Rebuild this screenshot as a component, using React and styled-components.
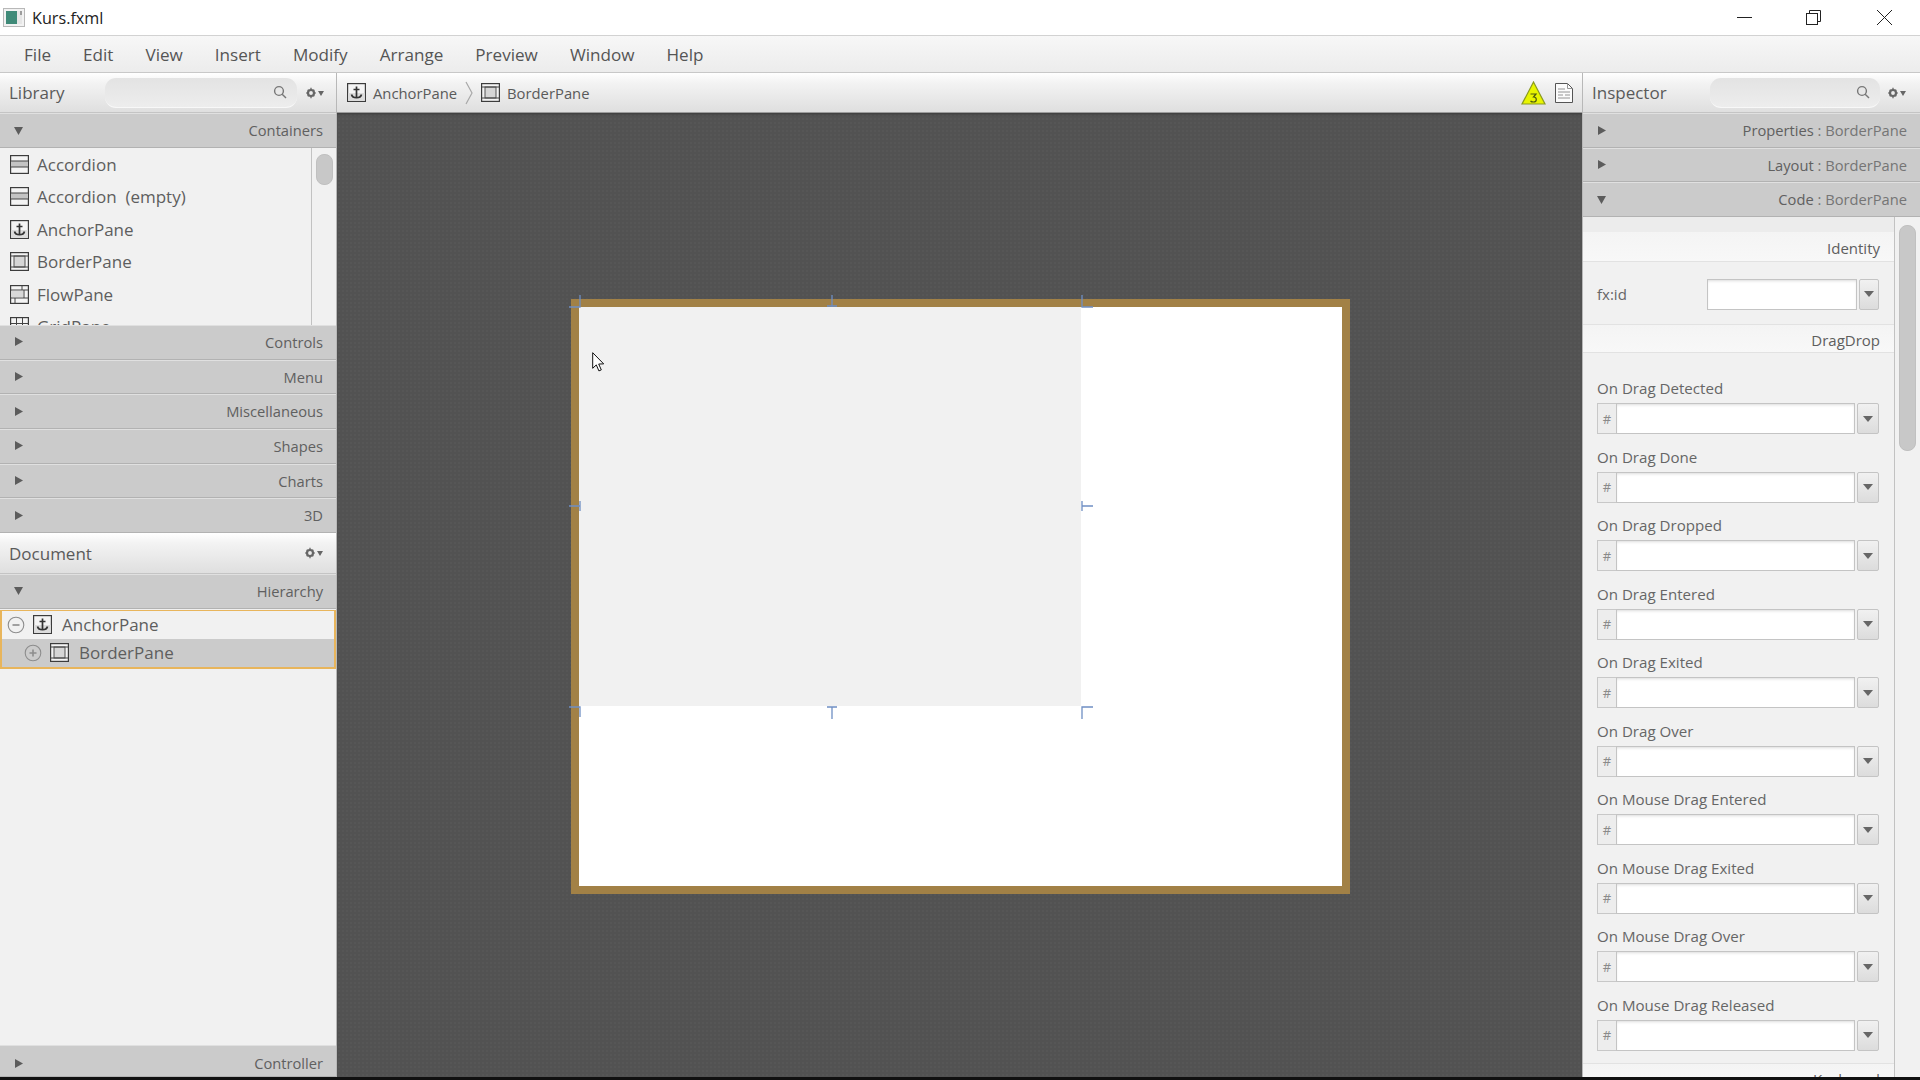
import React from 'react';
import styled, { createGlobalStyle } from 'styled-components';

const GlobalStyle = createGlobalStyle`
    html, body {
        margin: 0;
        padding: 0;
        background: #000;
    }
    body {
        font-family: "Open Sans", "Noto Sans", sans-serif;
        color: #5c5c5c;
    }
`;

const Page = styled('div')`
    width: 1920px;
    height: 1080px;
    box-sizing: border-box;
    padding-bottom: 3px;
    display: flex;
    flex-direction: column;
    overflow: hidden;
    background: #111;
`;

const TitleBar = styled('div')`
    height: 35px;
    flex: none;
    display: flex;
    align-items: center;
    background: #fff;
    padding-left: 3px;
`;

const TitleText = styled('span')`
    margin-left: 7px;
    font-size: 16.2px;
    color: #222;
    flex: 1;
`;

const WindowButton = styled('div')`
    width: 15px;
    height: 15px;
    margin-right: ${props => props.$gap}px;
    color: #222;
    display: flex;
`;

const MenuBar = styled('div')`
    height: 38px;
    flex: none;
    display: flex;
    align-items: center;
    padding-left: 8px;
    box-sizing: border-box;
    background: linear-gradient(#f7f7f7, #ececec);
    border-top: 1px solid #d2d2d2;
    border-bottom: 1px solid #c8c8c8;
`;

const MenuItem = styled('span')`
    padding: 0 16px;
    font-size: 17.1px;
    color: #555;
`;

const Main = styled('div')`
    flex: 1;
    min-height: 0;
    display: flex;
`;

const SidePanel = styled('div')`
    width: ${props => props.$width}px;
    flex: none;
    display: flex;
    flex-direction: column;
    min-height: 0;
    background: #f1f1f1;
    box-sizing: border-box;
`;

const PanelBar = styled('div')`
    height: ${props => props.$height || 40}px;
    flex: none;
    display: flex;
    align-items: center;
    box-sizing: border-box;
    padding: 0 8px 0 9px;
    background: linear-gradient(#fff 0%, #f3f3f3 25%, #dfdfdf 100%);
    border-bottom: 1px solid #c4c4c4;
`;

const PanelTitle = styled('span')`
    font-size: ${props => props.$size || 17}px;
    color: #5a5a5a;
    flex: ${props => props.$grow ? 1 : 'none'};
`;

const SearchField = styled('div')`
    width: ${props => props.$width}px;
    height: 30px;
    margin-left: ${props => props.$left}px;
    box-sizing: border-box;
    display: flex;
    align-items: center;
    justify-content: flex-end;
    padding-right: 10px;
    border-radius: 11px;
    background: linear-gradient(#e3e3e3, #ededed);
    border-bottom: 1px solid #f8f8f8;
    color: #777;
`;

const MenuGear = styled('span')`
    display: flex;
    margin-left: ${props => props.$left || 0}px;
    margin-right: ${props => props.$right || 0}px;
    color: #666;
`;

const SectionHeader = styled('div')`
    height: ${props => props.$height}px;
    flex: none;
    box-sizing: border-box;
    display: flex;
    align-items: center;
    justify-content: space-between;
    padding: ${props => props.$shift || 0}px 13px 1px 13px;
    background: #cbcbcb;
    border-top: 1px solid #e0e0e0;
    border-bottom: 1px solid #b2b2b2;
    font-size: 14.7px;
    color: #606060;
`;

const HeaderText = styled('span')`
    b {
        font-weight: 400;
        color: #757575;
    }
`;

const ListArea = styled('div')`
    height: 177px;
    flex: none;
    display: flex;
    overflow: hidden;
    background: #f1f1f1;
`;

const ListColumn = styled('div')`
    flex: 1;
    min-width: 0;
    overflow: hidden;
`;

const ListRow = styled('div')`
    height: 32.5px;
    display: flex;
    align-items: center;
    padding-left: 10px;
    font-size: 17px;
    color: #5e5e5e;
    white-space: pre;
    svg {
        margin-right: 8px;
    }
`;

const ScrollTrack = styled('div')`
    width: ${props => props.$width}px;
    flex: none;
    box-sizing: border-box;
    border-left: 1px solid #c2c2c2;
    padding-top: ${props => props.$top}px;
    display: flex;
    justify-content: center;
    background: #f1f1f1;
`;

const ScrollThumb = styled('div')`
    width: ${props => props.$width}px;
    height: ${props => props.$height}px;
    border-radius: 8px;
    background: #c8c8c8;
    border: 1px solid #c0c0c0;
    box-sizing: border-box;
`;

const Spacer = styled('div')`
    flex: 1;
    min-height: 0;
    background: ${props => props.$bg || '#f1f1f1'};
`;

const TreeBox = styled('div')`
    flex: none;
    border: 2px solid #e8b55c;
    border-top-width: 1px;
    margin-top: 1px;
`;

const TreeRow = styled('div')`
    height: 28px;
    display: flex;
    align-items: center;
    padding-left: ${props => props.$indent}px;
    font-size: 17px;
    color: #5e5e5e;
    background: ${props => props.$selected ? '#cbcbcb' : '#f1f1f1'};
`;

const TreeToggle = styled('span')`
    display: flex;
    margin-right: 8px;
    color: #8d8d8d;
`;

const TreeLabel = styled('span')`
    margin-left: 10px;
`;

const Center = styled('div')`
    flex: 1;
    min-width: 0;
    display: flex;
    flex-direction: column;
    border-left: 1px solid #b8b8b8;
    border-right: 1px solid #b8b8b8;
`;

const BreadBar = styled('div')`
    height: 40px;
    flex: none;
    box-sizing: border-box;
    display: flex;
    align-items: center;
    padding: 0 9px 0 10px;
    background: linear-gradient(#fff 0%, #f3f3f3 25%, #dfdfdf 100%);
    border-bottom: 1px solid #9c9c9c;
    font-size: 14.8px;
    color: #5a5a5a;
`;

const Crumb = styled('span')`
    display: flex;
    align-items: center;
    gap: 7px;
`;

const CrumbArrow = styled('span')`
    display: flex;
    margin: 0 8px;
    color: #a8a8a8;
`;

const BarFill = styled('span')`
    flex: 1;
`;

const BarIcon = styled('span')`
    display: flex;
    margin-left: ${props => props.$left || 0}px;
`;

const Canvas = styled('div')`
    flex: 1;
    min-height: 0;
    display: flex;
    align-items: center;
    justify-content: center;
    padding: 3px 0 0 2px;
    background-color: #525252;
    background-image: radial-gradient(#565656 25%, transparent 30%);
    background-size: 4px 4px;
    box-shadow: inset 0 3px 3px -2px #3a3a3a;
`;

const Frame = styled('div')`
    position: relative;
    width: 763px;
    height: 579px;
    flex: none;
    background: #fff;
    border: 8px solid #a28146;
`;

const ContentPane = styled('div')`
    position: relative;
    width: 502px;
    height: 399px;
    background: #f1f1f1;
`;

const HandleLayer = styled('svg')`
    position: absolute;
    left: -12px;
    top: -14px;
    overflow: visible;
`;

const Cursor = styled('svg')`
    position: absolute;
    left: 13px;
    top: 45px;
`;

const InspectorBody = styled('div')`
    flex: 1;
    min-height: 0;
    display: flex;
    overflow: hidden;
`;

const InspectorColumn = styled('div')`
    flex: 1;
    min-width: 0;
    overflow: hidden;
`;

const TopStrip = styled('div')`
    height: 15px;
    background: #ececec;
`;

const GroupHeading = styled('div')`
    height: ${props => props.$height}px;
    box-sizing: border-box;
    display: flex;
    align-items: center;
    justify-content: flex-end;
    padding: 3px 14px 0 0;
    font-size: 15px;
    color: #5e5e5e;
    background: linear-gradient(#f4f4f4, #f8f8f8);
    border-bottom: 1px solid #e2e2e2;
`;

const IdRow = styled('div')`
    height: 63px;
    box-sizing: border-box;
    display: flex;
    align-items: center;
    padding: 2px 15px 0 14px;
    font-size: 15px;
    color: #666;
    border-bottom: 1px solid #e2e2e2;
`;

const IdLabel = styled('span')`
    flex: 1;
`;

const FieldInput = styled('div')`
    width: ${props => props.$width}px;
    height: 31px;
    flex: none;
    box-sizing: border-box;
    background: #fff;
    border: 1px solid #c4c4c4;
    box-shadow: inset 0 2px 3px -1px #dcdcdc;
`;

const ComboButton = styled('div')`
    width: ${props => props.$width}px;
    height: 31px;
    flex: none;
    box-sizing: border-box;
    margin-left: 2px;
    display: flex;
    align-items: center;
    justify-content: center;
    background: linear-gradient(#f1f1f1, #dcdcdc);
    border: 1px solid #c4c4c4;
    border-radius: 2px;
`;

const ComboCaret = styled('span')`
    width: 0;
    height: 0;
    border-left: 5px solid transparent;
    border-right: 5px solid transparent;
    border-top: 6px solid #666;
`;

const EventList = styled('div')`
    padding: 25px 15px 0 14px;
    border-bottom: 1px solid #e2e2e2;
`;

const EventRow = styled('div')`
    height: 68.5px;
`;

const EventLabel = styled('div')`
    height: 21px;
    line-height: 21px;
    font-size: 15.1px;
    color: #666;
    margin-bottom: 4px;
`;

const EventField = styled('div')`
    display: flex;
`;

const HashBox = styled('div')`
    width: 19px;
    height: 31px;
    box-sizing: border-box;
    flex: none;
    display: flex;
    align-items: center;
    justify-content: center;
    font-size: 13px;
    color: #8a8a8a;
    background: #ededed;
    border: 1px solid #c8c8c8;
    border-right: 0;
`;

const Triangle = ({ open }) => (
    <svg width="11" height="11" viewBox="0 0 11 11">
        <path d={open ? 'M1 2h9L5.5 10z' : 'M2 1l8 4.5L2 10z'} fill="#5c5c5c" />
    </svg>
);

const Section = ({ title, sub, open, height = 34.7, shift }) => (
    <SectionHeader $height={height} $shift={shift}>
        <Triangle open={open} />
        <HeaderText>{title}{sub && <b> : {sub}</b>}</HeaderText>
    </SectionHeader>
);

const SearchIcon = () => (
    <svg width="14" height="14" viewBox="0 0 14 14" fill="none" stroke="currentColor" strokeWidth="1.4">
        <circle cx="6" cy="6" r="4.4" />
        <path d="M9.2 9.2L13 13" />
    </svg>
);

const GearMenu = () => (
    <svg width="18" height="12" viewBox="0 0 18 12">
        <circle cx="5" cy="6" r="3" fill="none" stroke="currentColor" strokeWidth="2.2" />
        <path d="M5 .8v2M5 9.2v2M.3 6h2M7.7 6h2M1.7 2.7l1.3 1.3M7 8l1.3 1.3M1.7 9.3L3 8M7 4l1.3-1.3" stroke="currentColor" strokeWidth="1.3" />
        <path d="M12 4h6l-3 5z" fill="currentColor" />
    </svg>
);

const FRAME = { fill: '#f4f4f4', stroke: '#3c3c3c', strokeWidth: 1.2 };

const AccordionIcon = () => (
    <svg width="19" height="19" viewBox="0 0 19 19">
        <rect x=".6" y=".6" width="17.8" height="17.8" {...FRAME} />
        <rect x="1" y="6" width="17" height="6" fill="#c4c4c4" />
        <path d="M1 6h17M1 12h17" stroke="#444" strokeWidth="1" />
    </svg>
);

const AnchorIcon = () => (
    <svg width="19" height="19" viewBox="0 0 19 19">
        <rect x=".6" y=".6" width="17.8" height="17.8" {...FRAME} />
        <rect x="1.2" y="10" width="16.6" height="8" fill="#dcdcdc" />
        <path d="M9.5 3.5v11M6.5 6.5h6M4.5 11.5c.6 2.4 2.4 3.2 5 3.2s4.4-.8 5-3.2" fill="none" stroke="#333" strokeWidth="1.7" />
    </svg>
);

const BorderIcon = () => (
    <svg width="19" height="19" viewBox="0 0 19 19">
        <rect x=".6" y=".6" width="17.8" height="17.8" {...FRAME} />
        <rect x="4" y="4" width="11" height="11" fill="#d6d6d6" stroke="#555" strokeWidth="1" />
        <path d="M1 4h17M1 15h17" stroke="#444" strokeWidth="1" />
    </svg>
);

const FlowIcon = () => (
    <svg width="19" height="19" viewBox="0 0 19 19">
        <rect x=".6" y=".6" width="17.8" height="17.8" {...FRAME} />
        <rect x="1" y="6" width="12" height="6" fill="#d8d8d8" />
        <path d="M1 5h17M1 13h17M12 1v4M5 13v5M14 5v8" stroke="#444" strokeWidth="1" fill="none" />
    </svg>
);

const GridIcon = () => (
    <svg width="19" height="19" viewBox="0 0 19 19">
        <rect x=".6" y=".6" width="17.8" height="17.8" {...FRAME} />
        <path d="M1 6.5h17M1 12.5h17M6.5 1v17M12.5 1v17" stroke="#444" strokeWidth="1" />
    </svg>
);

const TreeToggleIcon = ({ plus }) => (
    <svg width="18" height="18" viewBox="0 0 18 18" fill="none" stroke="currentColor">
        <circle cx="9" cy="9" r="7.8" strokeWidth="1.1" />
        <path d={plus ? 'M5.5 9h7M9 5.5v7' : 'M5.5 9h7'} strokeWidth="1.6" />
    </svg>
);

const paletteItems = [
    { name: 'Accordion', Icon: AccordionIcon },
    { name: 'Accordion  (empty)', Icon: AccordionIcon },
    { name: 'AnchorPane', Icon: AnchorIcon },
    { name: 'BorderPane', Icon: BorderIcon },
    { name: 'FlowPane', Icon: FlowIcon },
    { name: 'GridPane', Icon: GridIcon },
];

const librarySections = ['Controls', 'Menu', 'Miscellaneous', 'Shapes', 'Charts', '3D'];

const dragEvents = [
    'On Drag Detected',
    'On Drag Done',
    'On Drag Dropped',
    'On Drag Entered',
    'On Drag Exited',
    'On Drag Over',
    'On Mouse Drag Entered',
    'On Mouse Drag Exited',
    'On Mouse Drag Over',
    'On Mouse Drag Released',
];

const menus = ['File', 'Edit', 'View', 'Insert', 'Modify', 'Arrange', 'Preview', 'Window', 'Help'];

const Combo = ({ width, button = 22 }) => (
    <>
        <FieldInput $width={width} />
        <ComboButton $width={button}><ComboCaret /></ComboButton>
    </>
);

export default function App() {
    return (
        <Page>
            <GlobalStyle />
            <TitleBar>
                <svg width="22" height="19" viewBox="0 0 22 19">
                    <rect x=".5" y=".5" width="21" height="18" fill="#f2f2f2" stroke="#b8b8b8" />
                    <rect x="3" y="3" width="11" height="13" fill="#3f8a78" />
                    <rect x="14" y="3" width="5" height="13" fill="#e6e6e6" />
                    <path d="M18 3v4" stroke="#555" />
                </svg>
                <TitleText>Kurs.fxml</TitleText>
                <WindowButton $gap={54}>
                    <svg width="15" height="15" viewBox="0 0 15 15"><path d="M0 7.5h15" stroke="currentColor" /></svg>
                </WindowButton>
                <WindowButton $gap={56}>
                    <svg width="15" height="15" viewBox="0 0 15 15" fill="none" stroke="currentColor">
                        <rect x=".5" y="3.5" width="11" height="11" />
                        <path d="M3.5 3.5v-3h11v11h-3" />
                    </svg>
                </WindowButton>
                <WindowButton $gap={28}>
                    <svg width="15" height="15" viewBox="0 0 15 15"><path d="M0 0l15 15M15 0L0 15" stroke="currentColor" /></svg>
                </WindowButton>
            </TitleBar>
            <MenuBar>
                {menus.map(item => <MenuItem key={item}>{item}</MenuItem>)}
            </MenuBar>
            <Main>
                <SidePanel $width={336}>
                    <PanelBar>
                        <PanelTitle>Library</PanelTitle>
                        <SearchField $width={192} $left={41}><SearchIcon /></SearchField>
                        <MenuGear $left={9}><GearMenu /></MenuGear>
                    </PanelBar>
                    <Section title="Containers" open height={35} />
                    <ListArea>
                        <ListColumn>
                            {paletteItems.map(({ name, Icon }) => (
                                <ListRow key={name}><Icon />{name}</ListRow>
                            ))}
                        </ListColumn>
                        <ScrollTrack $width={25} $top={6}>
                            <ScrollThumb $width={17} $height={31} />
                        </ScrollTrack>
                    </ListArea>
                    {librarySections.map(item => <Section key={item} title={item} />)}
                    <PanelBar $height={41}>
                        <PanelTitle $grow>Document</PanelTitle>
                        <MenuGear $right={5}><GearMenu /></MenuGear>
                    </PanelBar>
                    <Section title="Hierarchy" open />
                    <TreeBox>
                        <TreeRow $indent={5}>
                            <TreeToggle><TreeToggleIcon /></TreeToggle>
                            <AnchorIcon />
                            <TreeLabel>AnchorPane</TreeLabel>
                        </TreeRow>
                        <TreeRow $indent={22} $selected>
                            <TreeToggle><TreeToggleIcon plus /></TreeToggle>
                            <BorderIcon />
                            <TreeLabel>BorderPane</TreeLabel>
                        </TreeRow>
                    </TreeBox>
                    <Spacer />
                    <Section title="Controller" height={32} shift={5} />
                </SidePanel>
                <Center>
                    <BreadBar>
                        <Crumb><AnchorIcon />AnchorPane</Crumb>
                        <CrumbArrow>
                            <svg width="8" height="24" viewBox="0 0 8 24" fill="none" stroke="currentColor" strokeWidth="1.2">
                                <path d="M1 1l6 11-6 11" />
                            </svg>
                        </CrumbArrow>
                        <Crumb><BorderIcon />BorderPane</Crumb>
                        <BarFill />
                        <BarIcon>
                            <svg width="25" height="24" viewBox="0 0 25 24">
                                <path d="M12.5 1L24 23H1z" fill="#e8f500" stroke="#8a9a20" strokeWidth="1.2" />
                                <path d="M9.5 13h5.5l-2.5 3c1.8 0 2.8 1 2.8 2.4 0 1.5-1.3 2.6-3 2.6-1.2 0-2.2-.4-2.8-1" fill="none" stroke="#4c5a10" strokeWidth="1.2" />
                            </svg>
                        </BarIcon>
                        <BarIcon $left={9}>
                            <svg width="18" height="20" viewBox="0 0 18 20" fill="#fbfbfb" stroke="#555">
                                <path d="M.5.5h12l5 5v14H.5z" />
                                <path d="M12.5.5v5h5M3 6h7M3 9h12M3 12h5M10 12h5M3 15h12" fill="none" strokeWidth=".9" stroke="#888" />
                            </svg>
                        </BarIcon>
                    </BreadBar>
                    <Canvas>
                        <Frame>
                            <ContentPane>
                                <HandleLayer width="526" height="426" viewBox="0 0 526 426" fill="none" stroke="#6f8fc4" strokeWidth="1.3">
                                    <path d="M13 2v12H2M265 2v12M260 13h10M515 2v12h11M2 213h11M13 208v10M515 208v10M515 213h11M2 414h11v10M260 414h10M265 414v12M526 414h-11v12" />
                                </HandleLayer>
                                <Cursor width="13" height="20" viewBox="0 0 13 20">
                                    <path d="M.7.7v15.6l3.6-3.4 2.6 6 2.4-1-2.6-5.9 5-.1z" fill="#fff" stroke="#111" />
                                </Cursor>
                            </ContentPane>
                        </Frame>
                    </Canvas>
                </Center>
                <SidePanel $width={337}>
                    <PanelBar>
                        <PanelTitle>Inspector</PanelTitle>
                        <SearchField $width={170} $left={43}><SearchIcon /></SearchField>
                        <MenuGear $left={8}><GearMenu /></MenuGear>
                    </PanelBar>
                    <Section title="Properties" sub="BorderPane" height={35} />
                    <Section title="Layout" sub="BorderPane" height={34} />
                    <Section title="Code" sub="BorderPane" open height={35} />
                    <InspectorBody>
                        <InspectorColumn>
                            <TopStrip />
                            <GroupHeading $height={30}>Identity</GroupHeading>
                            <IdRow>
                                <IdLabel>fx:id</IdLabel>
                                <Combo width={150} button={20} />
                            </IdRow>
                            <GroupHeading $height={28}>DragDrop</GroupHeading>
                            <EventList>
                                {dragEvents.map(item => (
                                    <EventRow key={item}>
                                        <EventLabel>{item}</EventLabel>
                                        <EventField>
                                            <HashBox>#</HashBox>
                                            <Combo width={239} />
                                        </EventField>
                                    </EventRow>
                                ))}
                            </EventList>
                            <GroupHeading $height={28}>Keyboard</GroupHeading>
                        </InspectorColumn>
                        <ScrollTrack $width={26} $top={8}>
                            <ScrollThumb $width={17} $height={226} />
                        </ScrollTrack>
                    </InspectorBody>
                </SidePanel>
            </Main>
        </Page>
    );
}
